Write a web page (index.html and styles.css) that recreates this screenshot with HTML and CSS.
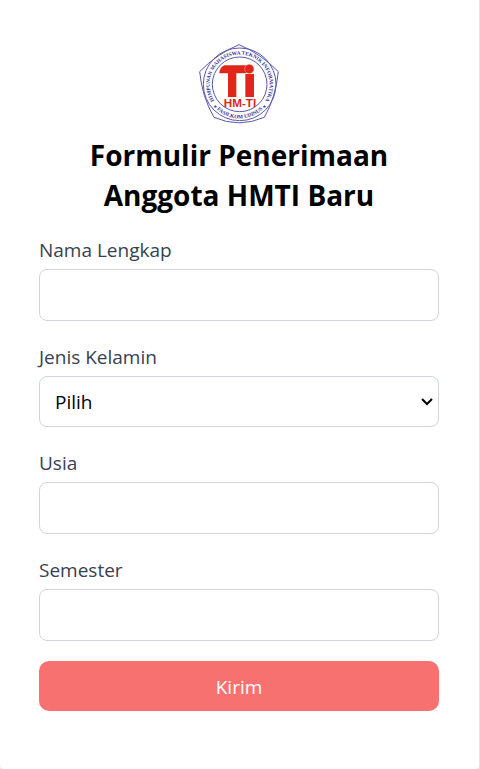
FILE: index.html
```html
<!DOCTYPE html>
<html lang="id">
<head>
<meta charset="utf-8">
<meta name="viewport" content="width=device-width, initial-scale=1">
<title>Formulir Penerimaan Anggota HMTI Baru</title>
<link rel="stylesheet" href="styles.css">
</head>
<body>
<main class="card">
  <svg class="logo" viewBox="15 12 240 240" role="img" aria-label="HM-TI">
    <defs>
      <path id="ring-top" d="M66 189 A90 90 0 1 1 208 189"/>
      <path id="ring-bottom" d="M58 197 A101 101 0 0 0 216 197"/>
    </defs>
    <path class="logo-line" d="M135 14 Q202 42 253 95 Q245 172 211 232 Q135 265 60 232 Q24 170 17 95 Q68 42 135 14Z"/>
    <circle class="logo-line" cx="137" cy="133" r="109"/>
    <circle class="logo-line" cx="137" cy="133" r="82"/>
    <text class="logo-ring"><textPath href="#ring-top" startOffset="50%">HIMPUNAN MAHASISWA TEKNIK INFORMATIKA</textPath></text>
    <text class="logo-ring"><textPath href="#ring-bottom" startOffset="50%">FASILKOM UDINUS</textPath></text>
    <text class="logo-star" x="64" y="205">★</text>
    <text class="logo-star" x="211" y="205">★</text>
    <path class="logo-red" d="M91 76 H158 V100 H127 V171 H102 V100 H76 Q77 82 91 76Z"/>
    <path class="logo-red" d="M154 102 H180 V171 H154Z"/>
    <circle class="logo-red logo-dot" cx="166" cy="87" r="14"/>
    <text class="logo-name" x="138" y="202">HM-TI</text>
  </svg>
  <h1 class="title">Formulir Penerimaan Anggota HMTI Baru</h1>
  <form class="form">
    <div class="field">
      <label for="nama">Nama Lengkap</label>
      <input class="control" id="nama" type="text">
    </div>
    <div class="field">
      <label for="kelamin">Jenis Kelamin</label>
      <div class="select-wrap">
        <select class="control" id="kelamin">
          <option>Pilih</option>
          <option>Laki-laki</option>
          <option>Perempuan</option>
        </select>
        <svg class="chevron" viewBox="0 0 12 8" aria-hidden="true"><path d="M1 1 L6 6 L11 1"/></svg>
      </div>
    </div>
    <div class="field">
      <label for="usia">Usia</label>
      <input class="control" id="usia" type="text">
    </div>
    <div class="field">
      <label for="semester">Semester</label>
      <input class="control" id="semester" type="text">
    </div>
    <button class="submit" type="button">Kirim</button>
  </form>
</main>
</body>
</html>
```
FILE: styles.css
```css
* {
  box-sizing: border-box;
}

body {
  margin: 0;
  padding-right: 1px;
  background: #e5e5e5;
  font-family: "Segoe UI", "Open Sans", "Noto Sans", sans-serif;
  font-size: 19px;
}

.card {
  display: flex;
  flex-direction: column;
  padding: 44px 40px 58px 39px;
  border-radius: 0 0 4px 4px;
  background: #fff;
}

.logo {
  align-self: center;
  width: 80px;
  height: 80px;
  overflow: visible;
}

.logo-line {
  fill: none;
  stroke: #5a58a8;
  stroke-width: 3;
}

.logo-ring {
  fill: #35338f;
  font-family: "Liberation Serif", serif;
  font-size: 16px;
  font-weight: 700;
  text-anchor: middle;
}

.logo-star {
  fill: #35338f;
  font-family: "DejaVu Sans", sans-serif;
  font-size: 14px;
  text-anchor: middle;
}

.logo-red {
  fill: #e1251b;
}

.logo-dot {
  stroke: #fff;
  stroke-width: 1;
}

.logo-name {
  fill: #e1251b;
  font-family: "Liberation Sans", sans-serif;
  font-size: 35px;
  font-weight: 700;
  text-anchor: middle;
}

.title {
  max-width: 320px;
  margin: 11px auto 19px;
  color: #000;
  font-size: 28px;
  font-weight: 700;
  line-height: 40px;
  text-align: center;
}

.form {
  display: flex;
  flex-direction: column;
  gap: 20px;
}

.field {
  display: flex;
  flex-direction: column;
  gap: 2px;
  color: #374151;
  line-height: 33px;
}

.control {
  width: 100%;
  height: 52px;
  padding: 2px 15px 0;
  border: 1px solid #d1d5db;
  border-radius: 8px;
  background: #fff;
  color: #000;
  font: inherit;
}

.select-wrap {
  display: grid;
  position: relative;
}

select.control {
  height: 51px;
  appearance: none;
}

.chevron {
  position: absolute;
  top: 22px;
  right: 6px;
  width: 12px;
  height: 8px;
  fill: none;
  stroke: #000;
  stroke-width: 2;
  pointer-events: none;
}

.submit {
  height: 50px;
  padding: 2px 16px 0;
  border: 0;
  border-radius: 10px;
  background: #f87171;
  color: #fff;
  font: inherit;
}
```
